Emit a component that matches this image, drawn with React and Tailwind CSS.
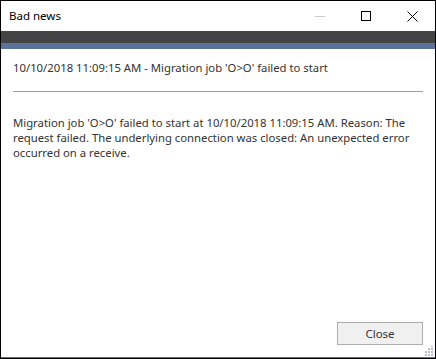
import React from 'react';

const font = { fontFamily: '"Noto Sans", "Open Sans", sans-serif' };

const ResizeGrip = () => (
  <svg width="10" height="10" viewBox="0 0 10 10" className="absolute right-[2px] bottom-[2px]">
    {[
      [8, 0],
      [8, 3], [5, 3],
      [8, 6], [5, 6], [2, 6],
      [8, 9], [5, 9], [2, 9],
    ].map(([x, y], i) => (
      <rect key={i} x={x} y={y - 1} width="2" height="2" fill="#b8c2cc" />
    ))}
  </svg>
);

export default function App() {
  return (
    <div
      className="w-[436px] h-[359px] bg-white border border-black flex flex-col text-[11.3px] text-[#333]"
      style={font}
    >
      {/* Title bar */}
      <div className="h-[30px] flex items-center shrink-0">
        <span className="pl-[8px] text-[11.5px] text-black flex-1">Bad news</span>
        <div className="flex items-center h-full">
          <div className="w-[46px] h-full flex items-center justify-center">
            <div className="w-[10px] h-px bg-[#c8c8c8]" />
          </div>
          <div className="w-[46px] h-full flex items-center justify-center">
            <div className="w-[10px] h-[10px] border border-black" />
          </div>
          <div className="w-[46px] h-full flex items-center justify-center">
            <svg width="11" height="11" viewBox="0 0 11 11">
              <path d="M0.5 0.5 L10.5 10.5 M10.5 0.5 L0.5 10.5" stroke="#000" strokeWidth="1" />
            </svg>
          </div>
        </div>
      </div>

      {/* Ribbon strips */}
      <div className="h-[12px] bg-[#444444] shrink-0" />
      <div className="h-[6px] bg-[#5a739b] shrink-0" />

      {/* Content */}
      <div className="flex-1 flex flex-col px-[12px]">
        <div className="mt-[11px] leading-[16px] whitespace-nowrap">
          10/10/2018 11:09:15 AM - Migration job 'O&gt;O' failed to start
        </div>
        <div className="mt-[15px] h-px bg-[#a0a0a0]" />
        <div className="mt-[23px] leading-[15px] whitespace-nowrap">
          Migration job 'O&gt;O' failed to start at 10/10/2018 11:09:15 AM. Reason: The
          <br />
          request failed. The underlying connection was closed: An unexpected error
          <br />
          occurred on a receive.
        </div>
        <div className="flex-1" />
        <div className="flex justify-end mb-[12px]">
          <button className="w-[86px] h-[23px] bg-[#f0f0f0] border border-[#adadad] text-[11.5px] text-[#333] leading-none">
            Close
          </button>
        </div>
      </div>

      {/* Bottom status edge */}
      <div className="relative h-[1px] bg-[#2b7bd4] shrink-0">
        <ResizeGrip />
      </div>
    </div>
  );
}
